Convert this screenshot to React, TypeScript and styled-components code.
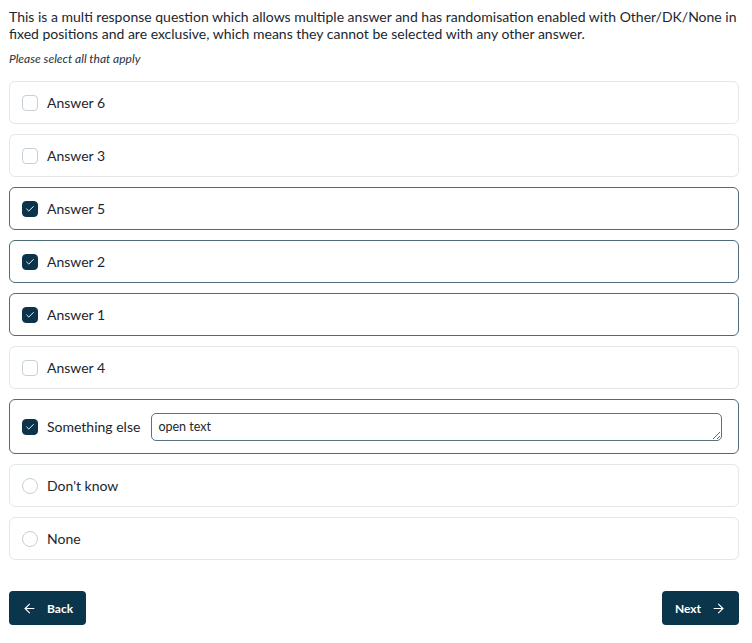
import { useState } from 'react'
import styled, { createGlobalStyle } from 'styled-components'
import { ArrowLeft, ArrowRight, Check } from 'lucide-react'

const GlobalStyle = createGlobalStyle`
  body {
    margin: 0;
    font-family: Lato, "Open Sans", sans-serif;
    color: #1d2a33;
    background: #fff;
  }
`;

const Page = styled.div`
  padding: 8px 13px 0 9px;
  display: flex;
  flex-direction: column;
`;

const Question = styled.p`
  margin: 0;
  font-size: 14px;
  line-height: 17px;
  color: #1b2730;
`;

const Hint = styled.p`
  margin: 9px 0 15px;
  font-size: 12px;
  line-height: 15px;
  font-style: italic;
  color: #26323c;
`;

const Options = styled.div`
  display: flex;
  flex-direction: column;
  gap: 10px;
`;

const Card = styled.label<{ $selected: boolean; $tall?: boolean }>`
  display: flex;
  align-items: center;
  box-sizing: border-box;
  height: ${p => (p.$tall ? '55px' : '43px')};
  padding: 0 16px 0 12px;
  border: 1px solid ${p => (p.$selected ? '#4f6b7b' : '#e2e7ea')};
  border-radius: 6px;
  cursor: pointer;
`;

const Box = styled.span<{ $checked: boolean; $round?: boolean }>`
  flex: none;
  width: 16px;
  height: 16px;
  box-sizing: border-box;
  border-radius: ${p => (p.$round ? '50%' : '4px')};
  border: 1.5px solid ${p => (p.$checked ? '#0c3349' : '#c6d0d7')};
  background: ${p => (p.$checked ? '#0c3349' : '#fff')};
  display: flex;
  align-items: center;
  justify-content: center;
  color: #fff;
`;

const Label = styled.span`
  margin-left: 9px;
  font-size: 14px;
  color: #1b2730;
  white-space: nowrap;
`;

const OpenText = styled.textarea`
  flex: 1;
  margin-left: 11px;
  height: 28px;
  box-sizing: border-box;
  padding: 6px 6px;
  border: 1px solid #587282;
  border-radius: 5px;
  font-family: Lato, "Open Sans", sans-serif;
  font-size: 12.5px;
  line-height: 14px;
  color: #1b2730;
  resize: vertical;
  overflow: hidden;
`;

const Footer = styled.div`
  display: flex;
  justify-content: space-between;
  margin-top: 31px;
`;

const NavButton = styled.button`
  display: flex;
  align-items: center;
  gap: 10px;
  height: 34px;
  padding: 0 13px;
  border: none;
  border-radius: 4px;
  background: #0b354a;
  color: #fff;
  font-family: Lato, "Open Sans", sans-serif;
  font-size: 12px;
  font-weight: 700;
  cursor: pointer;
`;

type Option = { id: string; label: string; exclusive?: boolean; other?: boolean };

const options: Option[] = [
  { id: 'a6', label: 'Answer 6' },
  { id: 'a3', label: 'Answer 3' },
  { id: 'a5', label: 'Answer 5' },
  { id: 'a2', label: 'Answer 2' },
  { id: 'a1', label: 'Answer 1' },
  { id: 'a4', label: 'Answer 4' },
  { id: 'other', label: 'Something else', other: true },
  { id: 'dk', label: "Don't know", exclusive: true },
  { id: 'none', label: 'None', exclusive: true },
];

const App = () => {
  const [picked, setPicked] = useState<string[]>(['a5', 'a2', 'a1', 'other']);
  const [other, setOther] = useState('open text');

  // Don't know / None clear everything else; any regular answer clears them
  const toggle = (opt: Option) => {
    if (opt.exclusive) {
      setPicked(picked.includes(opt.id) ? [] : [opt.id]);
      return;
    }
    const rest = picked.filter(id => !options.find(o => o.id === id)?.exclusive);
    setPicked(rest.includes(opt.id) ? rest.filter(id => id !== opt.id) : [...rest, opt.id]);
  };

  return (
    <Page>
      <GlobalStyle />
      <Question>
        This is a multi response question which allows multiple answer and has randomisation enabled with
        Other/DK/None in fixed positions and are exclusive, which means they cannot be selected with any other
        answer.
      </Question>
      <Hint>Please select all that apply</Hint>
      <Options>
        {options.map(opt => {
          const on = picked.includes(opt.id);
          return (
            <Card key={opt.id} $selected={on} $tall={opt.other} onClick={() => toggle(opt)}>
              <Box $checked={on} $round={opt.exclusive}>
                {on && <Check size={10} strokeWidth={2.25} />}
              </Box>
              <Label>{opt.label}</Label>
              {opt.other && on && (
                <OpenText
                  value={other}
                  onChange={e => setOther(e.target.value)}
                  onClick={e => e.stopPropagation()}
                />
              )}
            </Card>
          );
        })}
      </Options>
      <Footer>
        <NavButton>
          <ArrowLeft size={15} strokeWidth={1.75} />
          Back
        </NavButton>
        <NavButton>
          Next
          <ArrowRight size={15} strokeWidth={1.75} />
        </NavButton>
      </Footer>
    </Page>
  );
};

export default App
